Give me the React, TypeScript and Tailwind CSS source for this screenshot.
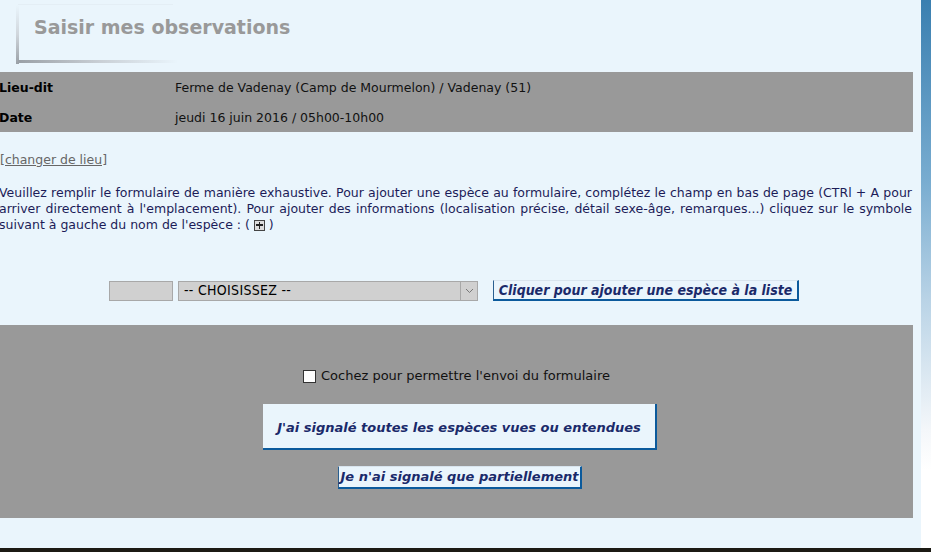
import React from "react";

const font = "font-['DejaVu_Sans',Verdana,sans-serif]";

function InfoRow({ label, value }: { label: string; value: string }) {
  return (
    <div className="flex h-[30px] items-center pt-[2px]">
      <span className="w-[176px] -ml-[1px] font-bold text-[12.5px] text-black">{label}</span>
      <span className="text-[12.5px] text-[#111]">{value}</span>
    </div>
  );
}

export default function App() {
  const lines = [
    "Veuillez remplir le formulaire de manière exhaustive. Pour ajouter une espèce au formulaire, complétez le champ en bas de page (CTRl + A pour",
    "arriver directement à l'emplacement). Pour ajouter des informations (localisation précise, détail sexe-âge, remarques...) cliquez sur le symbole",
  ];

  return (
    <div className={`${font} w-[931px] h-[552px] overflow-hidden flex flex-col`}>
      <div className="flex h-[548px]">
        {/* main panel */}
        <div className="w-[921px] bg-[#eaf5fc] flex flex-col">
          {/* title */}
          <div className="pt-[4px] pl-[18px]">
            <div className="relative w-[155px] h-[57px] border-t border-t-[#e4eef5]">
              <div className="absolute left-[-2px] top-0 h-[59px] w-[3px] bg-gradient-to-b from-transparent via-[#d0d6dc] to-[#9aa0a6]" />
              <div className="absolute left-0 bottom-[-2px] h-[3px] w-[160px] bg-gradient-to-r from-[#9aa0a6] via-[#c8ced4] to-transparent" />
              <h1 className="pl-[16px] pt-[8px] whitespace-nowrap text-[19px] font-bold text-[#999999]">
                Saisir mes observations
              </h1>
            </div>
          </div>

          {/* info bar */}
          <div className="mt-[11px] w-[913px] bg-[#999999] flex flex-col">
            <InfoRow label="Lieu-dit" value="Ferme de Vadenay (Camp de Mourmelon) / Vadenay (51)" />
            <InfoRow label="Date" value="jeudi 16 juin 2016 / 05h00-10h00" />
          </div>

          <div className="mt-[19px] leading-[16px]">
            <a className="text-[12.5px] text-[#666] underline cursor-pointer">[changer de lieu]</a>
          </div>

          {/* instructions */}
          <div className="mt-[17px] w-[913px] -ml-[1px] text-[12.5px] leading-[16px] text-[#1c1c58]">
            {lines.map((l) => (
              <div key={l} className="text-justify [text-align-last:justify] whitespace-nowrap">
                {l}
              </div>
            ))}
            <div className="flex items-center">
              suivant à gauche du nom de l'espèce : (&nbsp;
              <span className="inline-flex w-[11px] h-[11px] border border-[#444] bg-[#ddd] items-center justify-center relative">
                <span className="absolute w-[7px] h-[1.5px] bg-[#222]" />
                <span className="absolute h-[7px] w-[1.5px] bg-[#222]" />
              </span>
              &nbsp;)
            </div>
          </div>

          {/* add species row */}
          <div className="mt-[47px] pl-[109px] flex items-center h-[21px]">
            <div className="w-[64px] h-[20px] bg-[#d0d0d0] border border-[#a8a8a8]" />
            <div className="ml-[5px] w-[300px] h-[20px] bg-[#d0d0d0] border border-[#a8a8a8] flex items-center justify-between">
              <span className="pl-[5px] text-[14px] tracking-[0.3px] text-black font-['DejaVu_Sans_Condensed','DejaVu_Sans',sans-serif]">-- CHOISISSEZ --</span>
              <span className="w-[17px] h-[18px] border-l border-[#a8a8a8] flex items-center justify-center">
                <svg width="9" height="6" viewBox="0 0 9 6" fill="none">
                  <path d="M1 1l3.5 3.5L8 1" stroke="#777" strokeWidth="1" />
                </svg>
              </span>
            </div>
            <button className="ml-[15px] w-[306px] h-[21px] bg-[#eaf5fc] border-t border-l border-t-[#d8e4ee] border-l-[#2a5f90] border-r-2 border-b-2 border-r-[#0b5a9c] border-b-[#0b5a9c] text-[14px] font-bold italic text-[#1a2a6a] font-['DejaVu_Sans_Condensed','DejaVu_Sans',sans-serif] flex items-center justify-center whitespace-nowrap">
              Cliquer pour ajouter une espèce à la liste
            </button>
          </div>

          {/* submit section */}
          <div className="mt-[24px] w-[913px] h-[193px] bg-[#999999] flex flex-col items-center pt-[43px]">
            <label className="flex items-center text-[13px] leading-[16px] text-[#111]">
              <span className="w-[13px] h-[13px] bg-white border border-[#333] mr-[5px]" />
              Cochez pour permettre l'envoi du formulaire
            </label>
            <div className="pl-[7px] mt-[20px]">
              <button className="w-[394px] h-[46px] pt-[3px] bg-[#eaf5fc] border-r-2 border-b-2 border-r-[#0b5a9c] border-b-[#0b5a9c] text-[13px] font-bold italic text-[#1a2a6a] flex items-center justify-center">
                J'ai signalé toutes les espèces vues ou entendues
              </button>
            </div>
            <div className="pl-[7px] mt-[16px]">
              <button className="w-[244px] h-[23px] bg-[#eaf5fc] border-l border-t border-l-[#2a5f90] border-t-[#d8e4ee] border-r-2 border-b-2 border-r-[#0b5a9c] border-b-[#0b5a9c] text-[13px] font-bold italic text-[#1a2a6a] flex items-center justify-center">
                Je n'ai signalé que partiellement
              </button>
            </div>
          </div>
        </div>

        {/* right gradient strip */}
        <div className="w-[10px] bg-[linear-gradient(to_bottom,#3a7fb0_0px,#78acd0_180px,#b9d3e6_300px,#f4f7fa_430px,#ffffff_470px)]" />
      </div>
      <div className="h-[4px] bg-[#1c1a14]" />
    </div>
  );
}
